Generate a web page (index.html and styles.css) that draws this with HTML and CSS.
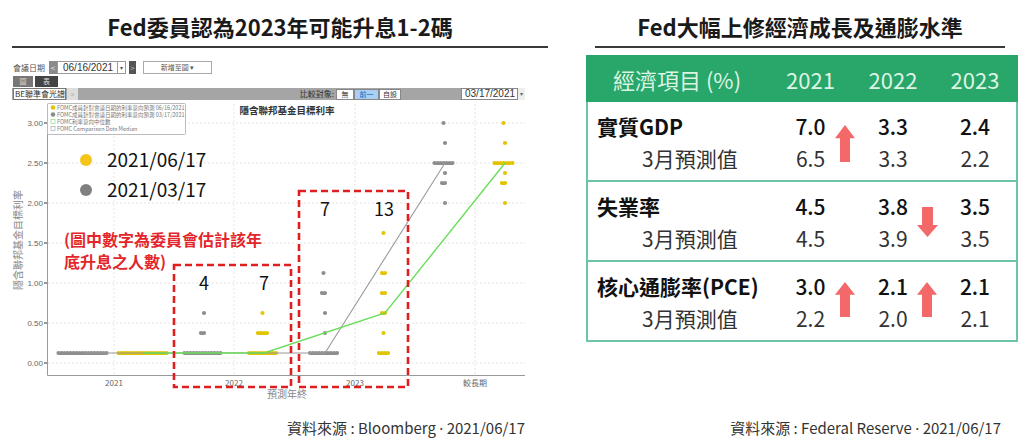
FILE: index.html
```html
<!DOCTYPE html>
<html lang="zh-Hant">
<head>
<meta charset="utf-8">
<title>Fed</title>
<link rel="stylesheet" href="styles.css">
</head>
<body>
<div class="page">
  <section class="left">
    <h1 class="title">Fed委員認為2023年可能升息1-2碼</h1>
    <div class="shot">
      <div class="toolbar">
        <span class="lbl">會議日期</span>
        <span class="nav prev">&lt;</span>
        <span class="date">06/16/2021</span>
        <span class="drop">▾</span>
        <span class="nav next">&gt;</span>
        <span class="addbtn">新增至圖 ▾</span>
      </div>
      <div class="tabs"><span class="tab">圖</span><span class="tab active">表</span></div>
      <div class="bar">
        <span class="bebox">BE聯準會光譜</span>
        <span class="more">»</span>
        <span class="cmp">比較對象:</span>
        <span class="seg s1">無</span><span class="seg s2">前一</span><span class="seg s3">自設</span>
        <span class="date2">03/17/2021</span><span class="drop2">▾</span>
      </div>
      <svg class="plot" width="536" height="300" viewBox="12 100 536 300" xmlns="http://www.w3.org/2000/svg">
        <g class="grid">
          <path d="M48 123H525M48 163H525M48 203H525M48 243H525M48 283H525M48 323H525M48 363H525"/>
          <path d="M114 104V375M234 104V375M355 104V375M475 104V375"/>
        </g>
        <path class="axis" d="M47.5 104V375.5H525"/>
        <path class="tick" d="M44 123H47M44 163H47M44 203H47M44 243H47M44 283H47M44 323H47M44 363H47"/>
        <g class="ylab">
          <text x="43" y="126">3.00</text>
          <text x="43" y="166">2.50</text>
          <text x="43" y="206">2.00</text>
          <text x="43" y="246">1.50</text>
          <text x="43" y="286">1.00</text>
          <text x="43" y="326">0.50</text>
          <text x="43" y="366">0.00</text>
        </g>
        <text class="ytitle" transform="translate(22 240) rotate(-90)">隱含聯邦基金目標利率</text>
        <g class="xlab">
          <text x="114" y="386">2021</text>
          <text x="234" y="386">2022</text>
          <text x="355" y="386">2023</text>
          <text x="475" y="386">較長期</text>
        </g>
        <text class="xtitle" x="287" y="398">預測年終</text>
        <text class="ctitle" x="287" y="114">隱含聯邦基金目標利率</text>

        <path class="dots gray" d="M58.5 353h51 M184.5 353h39 M201 333h6 M204 313h0.01 M310 353h30 M325 333h0.01 M325 313h0.01 M322 293h6 M323.5 273h3 M443.5 123h3 M445 143h0.01 M434.5 163h21 M445 173h0.01 M442 183h6 M445 203h0.01"/>
        <path class="dots gold" d="M118.5 353h51 M249 353h30 M258 333h12 M262.5 313h3 M379 353h12 M383.5 333h3 M382 313h6 M382 293h6 M382 273h6 M383.5 233h3 M503.5 123h3 M505 143h0.01 M494.5 163h21 M505 173h0.01 M502 183h6 M505 203h0.01"/>
        <polyline class="med-gray" points="84,353 204,353 325,353 445,163"/>
        <polyline class="med-green" points="144,353 264,353 385,313 505,163"/>

        <rect class="legbox" x="47.5" y="103.5" width="138" height="31" rx="1"/>
        <circle cx="53" cy="107.5" r="2.3" fill="#e3c400"/>
        <circle cx="53" cy="114.5" r="2.3" fill="#8c8c8c"/>
        <rect x="51" y="119.5" width="4" height="4" fill="none" stroke="#8fd98a" stroke-width="0.7"/>
        <rect x="51" y="126.5" width="4" height="4" fill="none" stroke="#aaa" stroke-width="0.7"/>
        <g class="legtxt">
          <text x="57" y="109.5">FOMC成員針對會議日期的利率意向預測 06/16/2021</text>
          <text x="57" y="116.5">FOMC成員針對會議日期的利率意向預測 03/17/2021</text>
          <text x="57" y="123.5">FOMC利率意向中位數</text>
          <text x="57" y="130.5">FOMC Comparison Dots Median</text>
        </g>

        <circle cx="86" cy="160" r="6" fill="#f5c518"/>
        <text class="big" x="107" y="167">2021/06/17</text>
        <circle cx="86" cy="190" r="6" fill="#808080"/>
        <text class="big" x="107" y="197">2021/03/17</text>

        <text class="note" x="64" y="246">(圖中數字為委員會估計該年</text>
        <text class="note" x="64" y="268">底升息之人數)</text>

        <rect class="dash" x="174" y="265" width="117" height="122"/>
        <rect class="dash" x="299" y="191" width="109" height="196"/>

        <g class="cnt">
          <text x="204" y="290">4</text>
          <text x="264" y="290">7</text>
          <text x="325" y="216">7</text>
          <text x="384" y="216">13</text>
        </g>
      </svg>
    </div>
    <p class="source">資料來源 : Bloomberg <span class="dot">·</span> 2021/06/17</p>
  </section>

  <section class="right">
    <h1 class="title rtitle">Fed大幅上修經濟成長及通膨水準</h1>
    <div class="table">
      <div class="thead">
        <span class="hname">經濟項目 (%)</span>
        <span class="hy">2021</span>
        <span class="hy">2022</span>
        <span class="hy">2023</span>
      </div>
      <div class="row r1">
        <span class="name">實質GDP</span>
        <span class="v v1">7.0</span><span class="v v1">3.3</span><span class="v v1">2.4</span>
        <span class="sub">3月預測值</span>
        <span class="v v2">6.5</span><span class="v v2">3.3</span><span class="v v2">2.2</span>
        <svg class="arrow up a1" viewBox="0 0 20 36" preserveAspectRatio="none"><polygon points="10,0 20,13 15,13 15,36 5,36 5,13 0,13"/></svg>
      </div>
      <div class="row r2">
        <span class="name">失業率</span>
        <span class="v v1">4.5</span><span class="v v1">3.8</span><span class="v v1">3.5</span>
        <span class="sub">3月預測值</span>
        <span class="v v2">4.5</span><span class="v v2">3.9</span><span class="v v2">3.5</span>
        <svg class="arrow down a2" viewBox="0 0 21 30" preserveAspectRatio="none"><polygon points="5,0 16,0 16,18 21,18 10.5,30 0,18 5,18"/></svg>
      </div>
      <div class="row r3">
        <span class="name">核心通膨率(PCE)</span>
        <span class="v v1">3.0</span><span class="v v1">2.1</span><span class="v v1">2.1</span>
        <span class="sub">3月預測值</span>
        <span class="v v2">2.2</span><span class="v v2">2.0</span><span class="v v2">2.1</span>
        <svg class="arrow up a3" viewBox="0 0 20 36" preserveAspectRatio="none"><polygon points="10,0 20,13 15,13 15,36 5,36 5,13 0,13"/></svg>
        <svg class="arrow up a4" viewBox="0 0 20 36" preserveAspectRatio="none"><polygon points="10,0 20,13 15,13 15,36 5,36 5,13 0,13"/></svg>
      </div>
    </div>
    <p class="source rsource">資料來源 : Federal Reserve <span class="dot">·</span> 2021/06/17</p>
  </section>
</div>
</body>
</html>
```

FILE: styles.css
```css
* { box-sizing: border-box; margin: 0; padding: 0; }
html, body { width: 1024px; height: 444px; overflow: hidden; background: #fff; }
body { font-family: "Noto Sans CJK TC", "Noto Sans", sans-serif; color: #111; }

.page { display: flex; height: 444px; padding-left: 12px; }
.left { width: 536px; display: flex; flex-direction: column; }
.right { width: 432px; margin-left: 38px; display: flex; flex-direction: column; }

.title {
  height: 48px; padding-top: 11px; line-height: 30px;
  font-size: 22px; font-weight: 700; text-align: center; color: #1a1a1a;
  border-bottom: 2px solid #3a3a3a; white-space: nowrap;
}
.rtitle { margin: 0 13px 0 9px; }

/* Bloomberg screenshot */
.shot { margin-top: 13px; }
.toolbar { display: flex; height: 13px; font-size: 8px; line-height: 13px; color: #555; }
.lbl { margin-left: 1px; width: 34px; white-space: nowrap; }
.nav { width: 8px; background: #8a8a8a; color: #eee; text-align: center; font-size: 8px; }
.prev { margin-left: 2px; }
.date { width: 61px; border: 1px solid #9a9a9a; font-family: "Liberation Sans", sans-serif; font-size: 10px; line-height: 11px; padding-left: 5px; color: #333; }
.drop { width: 8px; border: 1px solid #9a9a9a; border-left: 0; font-size: 6px; line-height: 11px; text-align: center; color: #555; }
.next { margin-left: 3px; width: 7px; background: #555; color: #bbb; }
.addbtn { margin-left: 7px; width: 69px; border: 1px solid #aaa; font-size: 7px; line-height: 11px; text-align: center; color: #555; }

.tabs { display: flex; margin: 2px 0 0 1px; height: 11px; }
.tab { width: 20px; background: #777; color: #ddd; font-size: 7px; line-height: 11px; text-align: center; }
.tab.active { margin-left: 2px; width: 23px; background: #444; }

.bar { display: flex; align-items: center; margin-top: 1px; height: 12px; width: 513px; background: #a5a5a5; }
.bebox { margin-left: 1px; width: 53px; height: 12px; background: #fff; border: 1px solid #777; font-size: 8px; line-height: 10px; padding-left: 1px; color: #333; white-space: nowrap; overflow: hidden; }
.more { margin-left: 1px; width: 11px; height: 12px; background: #ddd; color: #aaa; font-size: 8px; line-height: 12px; text-align: center; }
.cmp { margin-left: 214px; width: 44px; font-size: 8px; line-height: 12px; color: #333; text-align: right; padding-right: 2px; white-space: nowrap; }
.seg { height: 11px; font-size: 7px; line-height: 9px; text-align: center; background: #fff; border: 1px solid #888; color: #333; }
.s1 { width: 18px; }
.s2 { width: 25px; background: #a9cff5; color: #1a5fb4; }
.s3 { width: 22px; }
.date2 { margin-left: 60px; width: 57px; height: 12px; background: #fff; border: 1px solid #888; font-family: "Liberation Sans", sans-serif; font-size: 10px; line-height: 10px; padding-left: 3px; color: #333; }
.drop2 { width: 7px; height: 12px; background: #eee; font-size: 6px; line-height: 12px; text-align: center; color: #666; }

.plot { display: block; font-family: "Noto Sans CJK TC", sans-serif; }
.grid path { stroke: #e4e4e4; stroke-width: 1; stroke-dasharray: 2 2; fill: none; }
.axis { stroke: #9a9a9a; stroke-width: 1; fill: none; }
.tick { stroke: #777; stroke-width: 1.4; }
.ylab text { font-size: 8px; fill: #666; text-anchor: end; font-family: "Liberation Sans", sans-serif; }
.ytitle { font-size: 10px; fill: #888; text-anchor: middle; }
.xlab text { font-size: 8px; fill: #666; text-anchor: middle; }
.xtitle { font-size: 10px; fill: #888; text-anchor: middle; }
.ctitle { font-size: 9.5px; font-weight: 700; fill: #333; text-anchor: middle; }
.dots { fill: none; stroke-width: 4.2; stroke-linecap: round; stroke-dasharray: 0 3; }
.gray { stroke: #8e8e8e; }
.gold { stroke: #e3c400; }
.med-gray { fill: none; stroke: #9a9a9a; stroke-width: 1.1; }
.med-green { fill: none; stroke: #6cdc5c; stroke-width: 1.4; }
.legbox { fill: #fff; stroke: #bbb; stroke-width: 1; }
.legtxt text { font-size: 5.5px; fill: #777; }
.big { font-size: 19px; fill: #111; }
.note { font-size: 16px; font-weight: 700; fill: #e3262b; }
.dash { fill: none; stroke: #e01e1e; stroke-width: 2.6; stroke-dasharray: 7 4; }
.cnt text { font-size: 18px; fill: #111; text-anchor: middle; }

.source { margin-top: auto; margin-bottom: 6px; line-height: 20px; font-size: 15px; color: #333; text-align: right; padding-right: 23px; white-space: nowrap; }
.rsource { padding-right: 17px; }
.dot { font-family: "Noto Sans", sans-serif; }

/* table */
.table { margin-top: 7px; border: 2px solid #6cc5a8; border-top: 0; }
.thead {
  display: grid; grid-template-columns: 183px 83px 82px 84px; align-items: center;
  height: 47px; margin: 0 -2px; background: #29a669; color: #dcf4e4;
  font-size: 22px; line-height: 30px;
}
.hname { padding-left: 27px; white-space: nowrap; }
.hy { text-align: center; }
.hy:last-child { padding-right: 2px; }

.row {
  position: relative; display: grid; grid-template-columns: 181px 83px 82px 82px;
  grid-auto-rows: 32px; align-items: center; padding: 8px 0 6px;
  border-bottom: 2px solid #6cc5a8; font-size: 21px; line-height: 32px;
}
.row:last-child { border-bottom: 0; }
.name { font-weight: 700; padding-left: 9px; color: #111; white-space: nowrap; }
.sub { padding-left: 54px; color: #333; white-space: nowrap; }
.v { text-align: center; }
.v1 { color: #111; font-weight: 500; }
.v2 { color: #333; }

.arrow { position: absolute; fill: #f36868; }
.up { width: 20px; }
.a1 { left: 247px; top: 23px; height: 37px; }
.a2 { left: 329px; top: 25px; width: 21px; height: 30px; }
.a3 { left: 247px; top: 20px; height: 35px; }
.a4 { left: 329px; top: 20px; height: 35px; }
```
